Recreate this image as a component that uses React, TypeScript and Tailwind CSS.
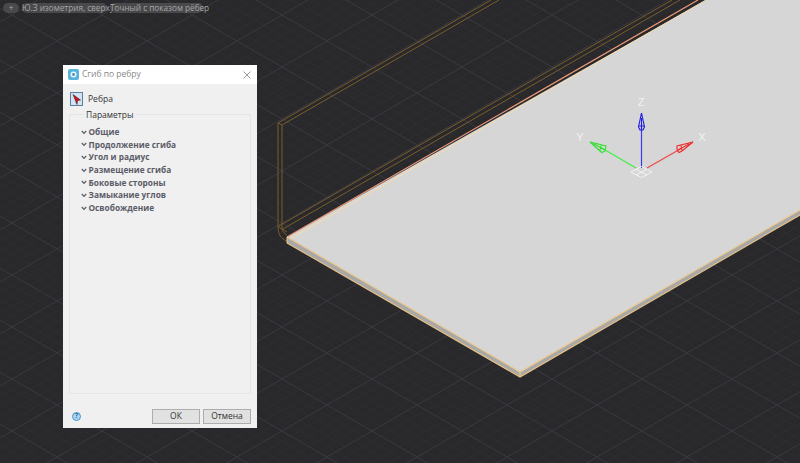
import React from "react";

const S = 26 / 45;
const W = 800;
const H = 463;

function gridLines() {
  const out: React.ReactElement[] = [];
  const ox = 327;
  const oy = 405;
  // intercepts of each family at x = 0, stepping by 1/5 of a major cell
  const step = 10.4;
  for (let k = -120; k <= 120; k++) {
    const major = k % 5 === 0;
    const c = k * step;
    // rising family y = oy - S (x-ox) + c
    const y0a = oy + S * ox + c;
    const y1a = y0a - S * W;
    // falling family y = oy + S (x-ox) + c
    const y0b = oy - S * ox + c;
    const y1b = y0b + S * W;
    const stroke = major ? "#393941" : "#2f2f33";
    out.push(<line key={`a${k}`} x1={0} y1={y0a} x2={W} y2={y1a} stroke={stroke} strokeWidth={major ? 1 : 0.8} />);
    out.push(<line key={`b${k}`} x1={0} y1={y0b} x2={W} y2={y1b} stroke={stroke} strokeWidth={major ? 1 : 0.8} />);
  }
  // draw major lines last so that they lie over the minor ones
  return out.sort((p, q) => Number(p.props.strokeWidth) - Number(q.props.strokeWidth));
}

function Scene() {
  const wire = "#7a5d2a";
  return (
    <svg className="absolute inset-0" width={W} height={H} viewBox={`0 0 ${W} ${H}`}>
      <rect width={W} height={H} fill="#29292c" />
      {gridLines()}

      {/* wireframe flange */}
      <g fill="none" stroke={wire} strokeWidth={1}>
        <path d="M278 123 L491 0" />
        <path d="M282 125 L499 0" />
        <path d="M278 123 L282 125" />
        <path d="M278 123 V227" />
        <path d="M282 125 V229.5" />
        <path d="M278 226.5 L672 0" />
        <path d="M282 229.5 L680 0" />
        <path d="M278 226.5 L287 232" />
        <path d="M278 227 C278 234 281 239 287 241" />
        <path d="M282 229.5 C283 232 285 234 287 235" />
      </g>

      {/* sheet */}
      <polygon points="287,237 520,372 800,210 800,215 520,377 287,243" fill="#a8a8a8" />
      <polygon points="287,237 706,0 800,0 800,210 520,372" fill="#d6d6d6" />
      <g fill="none">
        <path d="M287 237 L698 0" stroke="#ee9a78" strokeWidth={1.2} />
        <path d="M291 238.5 L706 0" stroke="#f6dca8" strokeWidth={1} />
        <path d="M287 237 L520 372 L800 210" stroke="#efc98a" strokeWidth={1.1} />
        <path d="M287 243 L520 377 L800 215" stroke="#e8c184" strokeWidth={1.1} />
        <path d="M287 237 V243 M520 372 V377" stroke="#efc98a" strokeWidth={1} />
      </g>

      {/* triad */}
      <g fill="none" strokeWidth={1}>
        <path d="M641.5 168 V128" stroke="#3b3bf2" strokeWidth={1.2} />
        <path d="M641.5 113 L644.5 127 L643 130 L640 130 L638.5 127 Z M641.5 118 V130 M639 126 H644" stroke="#1c1ce0" strokeWidth={1.1} />
        <path d="M636 168 L600 147" stroke="#3fef3f" strokeWidth={1.2} />
        <path d="M590 142 L606 146 L605 151 L602 152.5 L600 151 Z M594 144 L605 150 M601 145.5 L600 150.5" stroke="#30e030" strokeWidth={1.1} />
        <path d="M647 168 L682 148" stroke="#f04848" strokeWidth={1.2} />
        <path d="M693 142 L682 151 L679 152.5 L677 150 L677 146 Z M689 144 L678 150 M681 145.5 L682 150.5" stroke="#ee2a2a" strokeWidth={1.1} />
        <path d="M641.5 166.5 L652 172 L641.5 177.5 L631 172 Z M636 169.5 L647 175 M647 169.5 L636 175" stroke="#f4f4f4" strokeWidth={1} />
      </g>
      <g fill="#f2f2f2" fontFamily="'Liberation Sans', sans-serif" fontSize={11} textAnchor="middle">
        <text x={641} y={106}>Z</text>
        <text x={580} y={141}>Y</text>
        <text x={702} y={141}>X</text>
      </g>
    </svg>
  );
}

const sections = [
  "Общие",
  "Продолжение сгиба",
  "Угол и радиус",
  "Размещение сгиба",
  "Боковые стороны",
  "Замыкание углов",
  "Освобождение",
];

function Pill({ children, className }: { children: React.ReactNode; className: string }) {
  return (
    <div className={`h-[10px] rounded-full bg-[#49494b] text-[#a6a6a6] text-[8.2px] leading-[10px] text-center whitespace-nowrap ${className}`}>
      {children}
    </div>
  );
}

function Dialog() {
  return (
    <div
      className="absolute left-[63px] top-[65px] w-[194px] h-[363px] flex flex-col bg-[#f0f0f0] text-[#333]"
      style={{ fontFamily: "'Open Sans', sans-serif" }}
    >
      <div className="h-[19px] bg-white flex items-center pl-[5px] pr-[6px]">
        <svg width="11" height="11" viewBox="0 0 11 11">
          <rect x="0" y="0" width="11" height="11" rx="2" fill="#58b4dc" />
          <circle cx="5.5" cy="5.5" r="3" fill="#e8f4fa" />
          <circle cx="5.5" cy="5.5" r="1.4" fill="#4a90b8" />
        </svg>
        <span className="ml-[3px] text-[8.5px] leading-none text-[#8a8a8a]">Сгиб по ребру</span>
        <svg className="ml-auto" width="8" height="8" viewBox="0 0 8 8">
          <path d="M0.5 0.5 L7.5 7.5 M7.5 0.5 L0.5 7.5" stroke="#8c8c8c" strokeWidth="0.9" fill="none" />
        </svg>
      </div>

      <div className="flex items-center pl-[7px] mt-[8px] h-[14px]">
        <div className="w-[13px] h-[14px] border border-[#5f7f9c] bg-[#cfe4f4] flex items-center justify-center">
          <svg width="9" height="11" viewBox="0 0 9 11">
            <path d="M1 0.5 L8.5 6 L5.5 6.5 L5 10.5 Z" fill="#d8101a" stroke="#33101a" strokeWidth="0.5" />
          </svg>
        </div>
        <span className="ml-[5px] text-[8.5px] leading-none text-[#333]">Ребра</span>
      </div>

      <fieldset className="mx-[6px] mt-[2px] h-[286px] border border-[#e0e6e8] rounded-[1px] pl-[11px]">
        <legend className="ml-[3px] px-[2px] text-[8.5px] leading-[13px] text-[#333]">Параметры</legend>
        <div className="flex flex-col pt-[5px]">
          {sections.map((s) => (
            <div key={s} className="h-[12.67px] flex items-center">
              <svg width="6" height="5" viewBox="0 0 6 5">
                <path d="M0.8 1 L3 3.4 L5.2 1" stroke="#55606c" strokeWidth="1.3" fill="none" />
              </svg>
              <span className="ml-[1.5px] text-[8.3px] font-bold leading-none text-[#5c5c68] whitespace-nowrap">{s}</span>
            </div>
          ))}
        </div>
      </fieldset>

      <div className="flex items-center pl-[9px] pr-[6px] mt-[15px]">
        <div className="w-[9px] h-[9px] rounded-full bg-[#a9d4f0] border border-[#4f96c8] flex items-center justify-center text-[6.5px] font-bold leading-none text-[#2a6ea0]">
          ?
        </div>
        <button className="ml-auto w-[48px] h-[15px] bg-[#e1e1e1] border border-[#adadad] text-[8.5px] leading-none text-[#333]">
          ОК
        </button>
        <button className="ml-[3px] w-[48px] h-[15px] bg-[#e1e1e1] border border-[#adadad] text-[8.5px] leading-none text-[#333]">
          Отмена
        </button>
      </div>
    </div>
  );
}

export default function App() {
  return (
    <div className="relative w-[800px] h-[463px] overflow-hidden bg-[#29292c]">
      <Scene />
      <div
        className="absolute left-[3px] top-[3px] flex gap-[3px]"
        style={{ fontFamily: "'Open Sans', sans-serif" }}
      >
        <Pill className="w-[16px]">+</Pill>
        <Pill className="w-[85px]">Ю.З изометрия, сверху</Pill>
        <Pill className="w-[93px]">Точный с показом рёбер</Pill>
      </div>
      <Dialog />
    </div>
  );
}
